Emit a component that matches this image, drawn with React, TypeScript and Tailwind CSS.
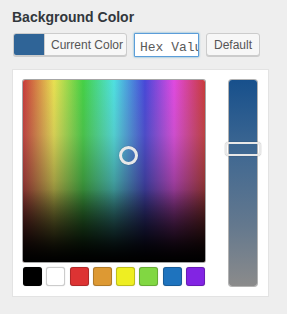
import React from 'react';

const swatches = ['#000000', '#ffffff', '#dd3333', '#dd9933', '#eeee22', '#81d742', '#1e73be', '#8224e3'];

export default function App() {
  return (
    <div className="w-[287px] h-[314px] bg-[#eeeeee] px-3 pt-[8px] font-['Liberation_Sans',Arial,sans-serif] text-[#23282d]">
      {/* Title */}
      <h2 className="text-[14px] font-semibold leading-[19px] text-[#32373c]">Background Color</h2>

      {/* Controls */}
      <div className="mt-[6px] flex items-start gap-[7px] pl-px">
        <button className="flex h-[23px] w-[114px] items-stretch overflow-hidden rounded-[3px] border border-[#cccccc] bg-[#f7f7f7] shadow-[0_1px_0_#cccccc]">
          <span className="w-[30px] shrink-0 bg-[#2f6497]" />
          <span className="flex items-center whitespace-nowrap border-l border-[#cccccc] pl-[6px] text-[12px] text-[#555555]">Current Color</span>
        </button>
        <div className="h-[24px] w-[65px] overflow-hidden rounded-[1px] border border-[#5b9dd9] bg-white shadow-[0_0_2px_rgba(30,140,190,0.8)]">
          <input
            readOnly
            placeholder="Hex Value"
            className="h-full w-full bg-transparent pl-[5px] font-['Liberation_Mono',monospace] text-[13px] text-[#444444] placeholder:text-[#5a5a5a] outline-none"
          />
        </div>
        <button className="h-[23px] w-[54px] rounded-[3px] border border-[#cccccc] bg-[#f7f7f7] text-[12px] text-[#555555] shadow-[0_1px_0_#cccccc]">
          Default
        </button>
      </div>

      {/* Picker panel */}
      <div className="mt-[12px] flex h-[228px] w-[257px] gap-[24px] border border-[#e3e3e3] bg-white pl-[10px] pt-[10px]">
        <div className="flex flex-col gap-[5px]">
          <div className="relative h-[182px] w-[182px] overflow-hidden rounded-[2px] shadow-[0_0_0_1px_rgba(0,0,0,0.35)]">
            <div className="absolute inset-0 bg-[linear-gradient(to_right,#c83b3b_0%,#e8e052_17%,#45d045_33%,#4fe0e0_50%,#4848d8_67%,#e04ae0_83%,#c83b3b_100%)]" />
            <div className="absolute inset-0 bg-[linear-gradient(to_bottom,rgba(128,128,128,0)_0%,rgba(100,100,100,0.15)_30%,rgba(40,40,40,0.35)_55%,rgba(0,0,0,0.9)_100%)]" />
            <div className="absolute inset-0 bg-[linear-gradient(to_bottom,rgba(0,0,0,0)_60%,rgba(0,0,0,0.55)_85%,rgba(0,0,0,1)_100%)]" />
            <div className="absolute left-[96px] top-[66px] h-[19px] w-[19px] rounded-full border-[3px] border-[#e8e8e8] shadow-[0_0_1px_rgba(0,0,0,0.5)]" />
          </div>
          <div className="flex justify-between">
            {swatches.map((c) => (
              <span
                key={c}
                className="h-[19px] w-[19px] rounded-[3px] shadow-[inset_0_0_0_1px_rgba(0,0,0,0.2),0_0_1px_rgba(0,0,0,0.3)]"
                style={{ backgroundColor: c }}
              />
            ))}
          </div>
        </div>

        {/* Slider */}
        <div className="relative h-[206px] w-[28px] rounded-[3px] bg-[linear-gradient(to_bottom,#17508c_0%,#3f6892_35%,#63788e_70%,#8b8b8b_100%)] shadow-[0_0_0_1px_rgba(0,0,0,0.3)]">
          <div className="absolute left-[-4px] top-[62px] h-[14px] w-[36px] rounded-[4px] border-2 border-[#e8e8e8] shadow-[0_0_1px_rgba(0,0,0,0.6)]" />
        </div>
      </div>
    </div>
  );
}
